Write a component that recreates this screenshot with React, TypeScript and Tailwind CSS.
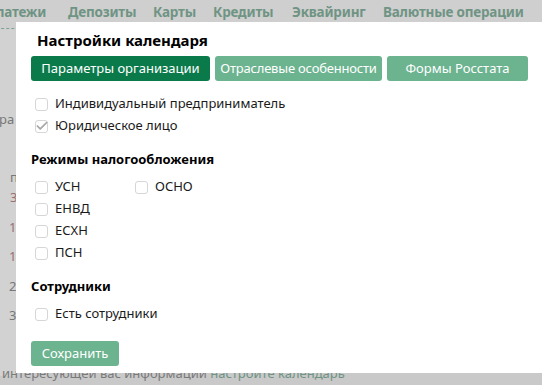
import { Check } from 'lucide-react'

const font = { fontFamily: '"Noto Sans", "Open Sans", sans-serif' }

function Box({ checked, label }: { checked?: boolean; label: string }) {
  return (
    <label className="flex items-center gap-[7px] h-[22px] text-[13px] text-[#1a1a1a] whitespace-nowrap">
      <span className="relative w-[13px] h-[13px] rounded-[3px] border border-[#d6d6d6] bg-white">
        {checked && (
          <Check className="absolute -left-[1px] -top-[2px] w-[14px] h-[14px] text-[#a6a6a6]" strokeWidth={3} />
        )}
      </span>
      {label}
    </label>
  )
}

export default function App() {
  const nav = [
    { t: 'латежи', w: 'w-[72px]' },
    { t: 'Депозиты', w: 'w-[85px]' },
    { t: 'Карты', w: 'w-[60px]' },
    { t: 'Кредиты', w: 'w-[79px]' },
    { t: 'Эквайринг', w: 'w-[91px]' },
    { t: 'Валютные операции', w: 'w-[170px]' },
  ]
  return (
    <div className="relative w-[542px] h-[385px] overflow-hidden bg-[#c9c9c9]" style={font}>
      {/* page behind the dialog */}
      <div className="flex items-start -ml-[4px] h-[30px] pt-[3px] text-[13.5px] font-bold text-[#6f9484] bg-[#cfcfcf] whitespace-nowrap tracking-[-0.2px] leading-[18px]">
        {nav.map((n, i) => (
          <div key={n.t} className={`${n.w} shrink-0`}>
            <span className={i === 0 ? 'inline-block border-b border-dashed border-[#7fa393] pb-[7px] pr-[4px]' : ''}>
              {n.t}
            </span>
          </div>
        ))}
      </div>
      <div className="flex flex-col text-[13px] text-[#777] bg-[#d2d2d2] w-[16px] h-[346px] overflow-hidden">
        <span className="mt-[80px] -ml-[1px] whitespace-nowrap">ра</span>
        <span className="mt-[38px] ml-[10px]">п</span>
        <span className="mt-[1px] ml-[10px] text-[#9a6f6f]">3</span>
        <span className="mt-[10px] ml-[9px] text-[#9a6f6f]">1</span>
        <span className="mt-[10px] ml-[9px] text-[#9a6f6f]">1</span>
        <span className="mt-[10px] ml-[9px]">2</span>
        <span className="mt-[10px] ml-[9px]">3</span>
      </div>
      <div className="absolute left-[2px] top-[364px] text-[13px] text-[#7a7a7a] whitespace-nowrap">
        интересующей вас информации <span className="text-[#6f9484]">настроите календарь</span>
      </div>

      {/* dialog */}
      <div className="absolute left-[16px] top-[22px] w-[540px] h-[351px] bg-white pl-[15px] pt-[6px]">
        <h2 className="ml-[6px] text-[15px] font-bold text-black leading-[24px]">Настройки календаря</h2>
        <div className="flex gap-[5px] mt-[4px] text-[13px] text-white whitespace-nowrap">
          <button className="h-[25px] w-[179px] rounded-[3px] bg-[#0b7a4b]">Параметры организации</button>
          <button className="h-[25px] w-[167px] rounded-[3px] bg-[#6cb38f] tracking-[-0.2px]">Отраслевые особенности</button>
          <button className="h-[25px] w-[141px] rounded-[3px] bg-[#6cb38f]">Формы Росстата</button>
        </div>
        <div className="ml-[4px] mt-[12px]">
          <Box label="Индивидуальный предприниматель" />
          <Box checked label="Юридическое лицо" />
        </div>
        <h3 className="mt-[12px] text-[13px] font-bold text-black leading-[20px]">Режимы налогообложения</h3>
        <div className="ml-[4px] mt-[7px] flex">
          <div className="w-[100px]">
            <Box label="УСН" />
            <Box label="ЕНВД" />
            <Box label="ЕСХН" />
            <Box label="ПСН" />
          </div>
          <Box label="ОСНО" />
        </div>
        <h3 className="mt-[12px] text-[13px] font-bold text-black leading-[20px]">Сотрудники</h3>
        <div className="ml-[4px] mt-[7px]">
          <Box label="Есть сотрудники" />
        </div>
        <button className="mt-[16px] h-[25px] w-[88px] rounded-[3px] bg-[#6cb38f] text-white text-[13px]">Сохранить</button>
      </div>
    </div>
  )
}
